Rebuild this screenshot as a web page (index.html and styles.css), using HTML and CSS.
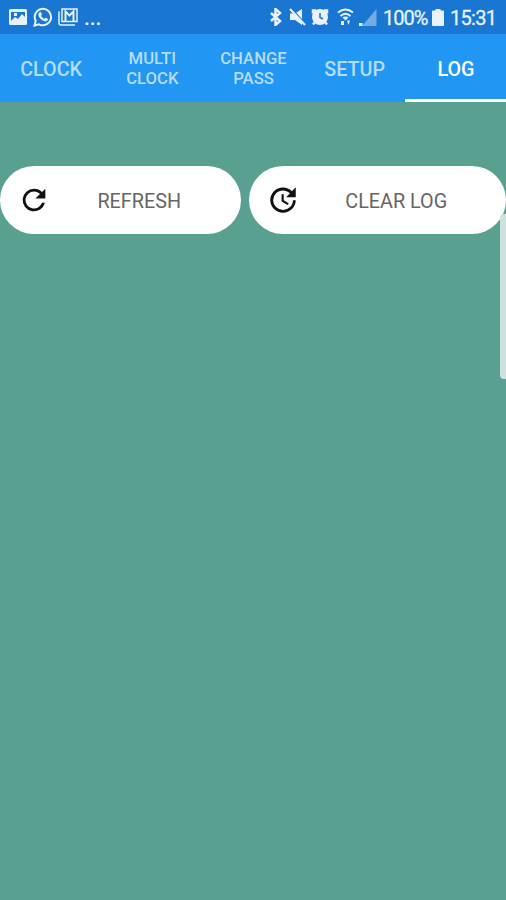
FILE: index.html
```
<!DOCTYPE html>
<html lang="en">
<head>
  <meta charset="UTF-8">
  <title>Log</title>
  <link rel="stylesheet" href="styles.css">
</head>
<body>

  <header class="status">
    <div class="notifications">
      <svg class="icon-picture" width="18" height="16" viewBox="0 0 18 16">
        <path fill-rule="evenodd" d="M1.500 0h15a1.500 1.500 0 0 1 1.500 1.500v13a1.500 1.500 0 0 1-1.500 1.500h-15a1.500 1.500 0 0 1-1.500-1.500v-13a1.500 1.500 0 0 1 1.500-1.500zM2 3v9l4-4 3 2 4-5 3 3V3zM5 4h3v3H5z"/>
      </svg>
      <svg class="icon-chat" width="20" height="20" viewBox="0 0 20 20">
        <path class="line" d="M1.500 18.500l1.200-4.500a8.200 8.200 0 1 1 3.300 3.300z"/>
        <path d="M6.700 5.200c.5-.4 1-.3 1.300.2l.9 2c.1.500-.6 1-.8 1.400.7 1.400 1.700 2.400 3.200 3 .5-.4.900-1.200 1.400-1l2 1c.4.300.2 1-.1 1.500-1.200 1.500-3 1.300-4.900.3-2-1.100-3.400-2.700-4.100-4.500-.5-1.500-.1-2.900 1.100-3.900z"/>
      </svg>
      <svg class="icon-mail" width="20" height="18" viewBox="0 0 20 18">
        <path class="thin" d="M1 3.500V15a2 2 0 0 0 2 2h14"/>
        <path class="thin" d="M4 1h15v12.500H4z"/>
        <path class="line" d="M7.500 13V3.500l4 4 4-4V13"/>
      </svg>
      <span class="more">...</span>
    </div>
    <div class="system">
      <svg class="icon-bluetooth" width="12" height="18" viewBox="0 0 12 18">
        <path class="line bold" d="M1 5l9 8-4.500 4V1L10 5l-9 8"/>
      </svg>
      <svg class="icon-mute" width="17" height="18" viewBox="0 0 17 18">
        <path d="M1 5.500h5l7-4.500v16l-7-5H1z"/>
        <path class="cut" d="M3 1l13 14.500"/>
        <path class="line" d="M1 1l15 16"/>
      </svg>
      <svg class="icon-alarm" width="18" height="18" viewBox="0 0 18 18">
        <circle cx="9" cy="9" r="8"/>
        <path class="line bold" d="M2 5.500V2.500H5M13 2.500h3v3M4 14l-2 2.500M14 14l2 2.500"/>
        <path class="hands" d="M9 5v4.500l3 1.500"/>
      </svg>
      <svg class="icon-wifi" width="17" height="18" viewBox="0 0 17 18">
        <path class="line" d="M1 4.500q7.500-6 15 0M3.500 8q5-4.500 10 0"/>
        <path d="M5.500 9.500q3-2 6 0l-3 3zM4 13h3v4H4zM10 12.500h3l-1.500 4.500z"/>
      </svg>
      <svg class="icon-signal" width="18" height="18" viewBox="0 0 18 18">
        <path class="weak" d="M17.500 1v17H3z"/>
        <path d="M0 15h3.500v3H0z"/>
      </svg>
      <span class="percent">100%</span>
      <svg class="icon-battery" width="12" height="17" viewBox="0 0 12 17">
        <path d="M3.500 0h5v1.500H11q1 0 1 1V16q0 1-1 1H1q-1 0-1-1V2.500q0-1 1-1h2.500z"/>
      </svg>
      <span class="time">15:31</span>
    </div>
  </header>

  <nav class="tabs">
    <a class="tab">CLOCK</a>
    <a class="tab small">MULTI<br>CLOCK</a>
    <a class="tab small">CHANGE<br>PASS</a>
    <a class="tab">SETUP</a>
    <a class="tab active">LOG</a>
  </nav>

  <main class="content">
    <div class="buttons">
      <button class="refresh">
        <svg width="34" height="34" viewBox="0 0 24 24">
          <path d="M17.650 6.350A7.958 7.958 0 0 0 12 4a8 8 0 1 0 7.730 10h-2.080A6 6 0 1 1 12 6c1.660 0 3.140.690 4.220 1.780L13 11h7V4z"/>
        </svg>
        <span>REFRESH</span>
      </button>
      <button class="clear">
        <svg width="34" height="34" viewBox="0 0 24 24">
          <path d="M21 10.120h-6.780l2.740-2.820c-2.730-2.700-7.150-2.800-9.880-.1a6.875 6.875 0 0 0 0 9.790 7.020 7.020 0 0 0 9.880 0C18.320 15.650 19 14.080 19 12.100h2c0 1.980-.880 4.550-2.640 6.290-3.510 3.480-9.210 3.480-12.720 0-3.500-3.470-3.530-9.110-.020-12.580a8.987 8.987 0 0 1 12.650 0L21 3zM12.500 8v4.250l3.500 2.080-.720 1.210L11 13V8z"/>
        </svg>
        <span>CLEAR LOG</span>
      </button>
    </div>
    <div class="scroll-handle"></div>
  </main>

</body>
</html>
```
FILE: styles.css
```
body { margin: 0; height: 900px; display: flex; flex-direction: column; overflow: hidden; background: #5aa090; font-family: Roboto, sans-serif; }

.status { height: 34px; display: flex; justify-content: space-between; background: #1976d2; color: #e8f1fc; }
.status svg { fill: #e8f1fc; flex: none; }
.status .line { fill: none; stroke: #e8f1fc; stroke-width: 2; }
.status .bold { stroke-width: 2.500; }
.status .thin { fill: none; stroke: #e8f1fc; stroke-width: 1.5; }
.status .cut { fill: none; stroke: #1976d2; stroke-width: 1.5; }
.status .hands { fill: none; stroke: #1976d2; stroke-width: 1.5; }
.status .weak { fill: #73abe4; }
.notifications, .system { display: flex; align-items: center; }
.notifications { padding-left: 9px; gap: 6px; }
.icon-mail { margin-left: -1px; }
.system { padding-right: 10px; }
.more { font-size: 21px; font-weight: 500; line-height: 34px; padding-top: 2px; letter-spacing: -0.1px; }
.icon-mute { margin-left: 7px; }
.icon-alarm { margin-left: 5px; }
.icon-wifi { margin-left: 8px; }
.icon-signal { margin-left: 5px; }
.percent, .time { font-size: 20px; line-height: 36px; padding-top: 2px; -webkit-text-stroke: 0.3px; }
.percent { width: 45px; margin-left: 6px; letter-spacing: -1px; }
.icon-battery { margin-left: 4px; }
.time { width: 46px; margin-left: 6px; letter-spacing: -0.7px; }

.tabs { height: 68px; display: flex; background: #2196f3; }
.tab { flex: 1; display: flex; align-items: center; justify-content: center; box-sizing: border-box; padding: 2px 0 0 1px; text-align: center; font-size: 19.700px; font-weight: 500; color: #b5dcfb; }
.small { font-size: 16.700px; line-height: 20px; }
.active { color: #fff; border-bottom: 3px solid #fff; padding-top: 5px; }

.content { position: relative; flex: 1; padding-top: 64px; }
.buttons { display: flex; gap: 8px; }
button { height: 68px; padding: 0; border: 0; border-radius: 34px; display: flex; align-items: center; background: #fff; color: #666; font: 19.800px Roboto, sans-serif; }
button svg { flex: none; fill: #111; }
button span { flex: 1; padding-top: 2px; text-align: center; }
.refresh { width: 241px; padding: 0 13px 0 17px; }
.clear { width: 258px; padding: 0 13px 0 17px; }
.scroll-handle { position: absolute; top: 112px; right: 0; width: 6px; height: 165px; border-radius: 4px 0 0 4px; background: #cee2dd; }
```
